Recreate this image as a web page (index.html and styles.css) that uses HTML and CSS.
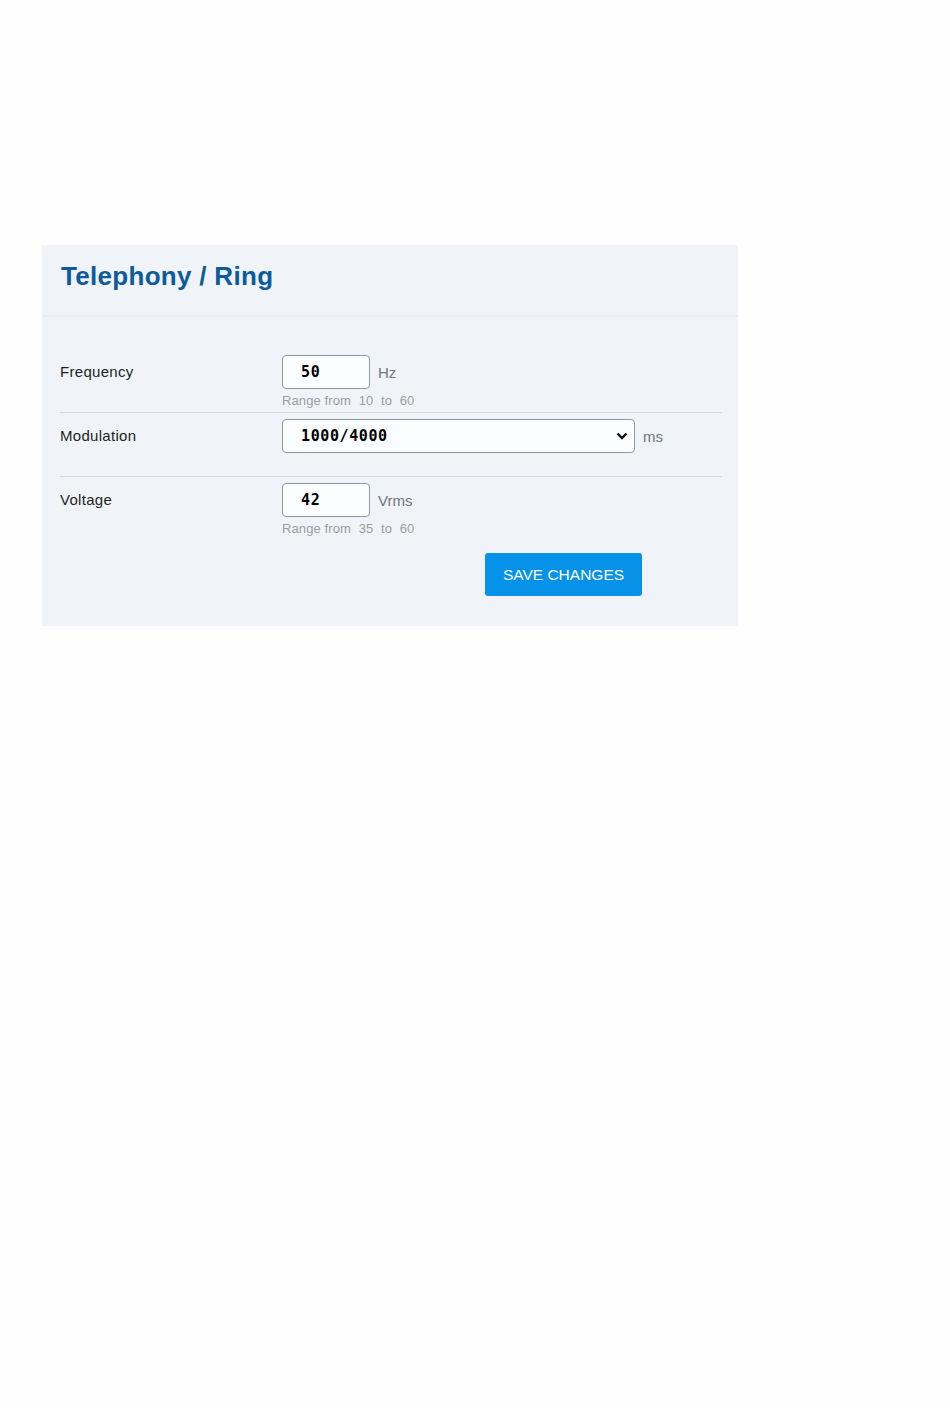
FILE: index.html
```html
<!DOCTYPE html>
<html lang="en">
<head>
    <meta charset="UTF-8">
    <meta name="viewport" content="width=device-width, initial-scale=1.0">
    <title>Telephony / Ring</title>
    <link rel="stylesheet" href="styles.css">
</head>
<body>
    <div class="panel">
        <div class="panel-header">
            <h1>Telephony / Ring</h1>
        </div>

        <form class="panel-body" id="ring-form">
            <div class="form-row">
                <label for="frequency">Frequency</label>
                <div class="control">
                    <div class="control-line">
                        <input type="text" id="frequency" class="num-input" value="50">
                        <span class="unit">Hz</span>
                    </div>
                    <div class="help">Range from <span>10</span> to <span>60</span></div>
                </div>
            </div>

            <div class="form-row">
                <label for="modulation">Modulation</label>
                <div class="control">
                    <div class="control-line">
                        <div class="select-wrap">
                            <select id="modulation" class="select-input">
                                <option>1000/4000</option>
                                <option>1000/2000</option>
                                <option>2000/4000</option>
                            </select>
                            <svg class="chevron" width="12" height="8" viewBox="0 0 12 8">
                                <path d="M1.5 1.5 L6 6 L10.5 1.5" fill="none" stroke="#111" stroke-width="2.4"/>
                            </svg>
                        </div>
                        <span class="unit">ms</span>
                    </div>
                    <div class="help"></div>
                </div>
            </div>

            <div class="form-row last">
                <label for="voltage">Voltage</label>
                <div class="control">
                    <div class="control-line">
                        <input type="text" id="voltage" class="num-input" value="42">
                        <span class="unit">Vrms</span>
                    </div>
                    <div class="help">Range from <span>35</span> to <span>60</span></div>
                </div>
            </div>

            <div class="form-actions">
                <button type="submit">Save changes</button>
            </div>
        </form>
    </div>

    <script>
    document.querySelector('#ring-form').addEventListener('submit', function(event) {
        event.preventDefault();
    });
    </script>
</body>
</html>
```

FILE: styles.css
```css
body {
    font-family: "Liberation Sans", Arial, sans-serif;
    margin: 0;
    padding: 245px 0 0 42px;
    background-color: #fefefe;
}

.panel {
    width: 696px;
    background-color: #f0f4f8;
}

.panel-header {
    height: 62px;
    padding: 0 19px 8px;
    display: flex;
    align-items: center;
    border-bottom: 2px solid #e8edf2;
}

.panel-header h1 {
    margin: 0;
    font-size: 26px;
    font-weight: bold;
    color: #0d5a9c;
    letter-spacing: 0.3px;
}

.panel-body {
    padding: 32px 16px 30px 18px;
}

.form-row {
    display: flex;
    padding-top: 6px;
    height: 57px;
    border-bottom: 1px solid #d3d8dd;
}

.form-row.last {
    border-bottom: none;
    height: auto;
}

.form-row label {
    width: 222px;
    flex-shrink: 0;
    line-height: 34px;
    font-size: 15px;
    letter-spacing: 0.3px;
    color: #1e1e1e;
}

.control {
    flex: 1;
}

.control-line {
    display: flex;
    align-items: center;
    gap: 8px;
}

.num-input,
.select-input {
    box-sizing: border-box;
    height: 34px;
    border: 1px solid #8c9aa8;
    border-radius: 4px;
    background: #fbfcfd;
    font-family: "DejaVu Sans Mono", monospace;
    font-weight: bold;
    font-size: 15px;
    letter-spacing: 0.6px;
    color: #000;
    padding: 0 0 0 18px;
    outline: none;
}

.num-input {
    width: 88px;
}

.select-wrap {
    position: relative;
}

.select-input {
    width: 353px;
    appearance: none;
    -webkit-appearance: none;
}

.chevron {
    position: absolute;
    right: 7px;
    top: 13px;
    pointer-events: none;
}

.unit {
    font-size: 15px;
    color: #6e7680;
}

.help {
    min-height: 18px;
    padding-top: 4px;
    font-size: 13px;
    letter-spacing: 0.1px;
    color: #9a9ea3;
}

.help span {
    margin: 0 4px;
}

.form-actions {
    padding: 14px 0 0 425px;
}

button {
    background-color: #0592e8;
    color: white;
    width: 157px;
    height: 43px;
    border: none;
    border-radius: 3px;
    font-family: "Liberation Sans", Arial, sans-serif;
    font-size: 15.5px;
    text-transform: uppercase;
    cursor: pointer;
}

button:hover {
    background-color: #0484d3;
}
```
